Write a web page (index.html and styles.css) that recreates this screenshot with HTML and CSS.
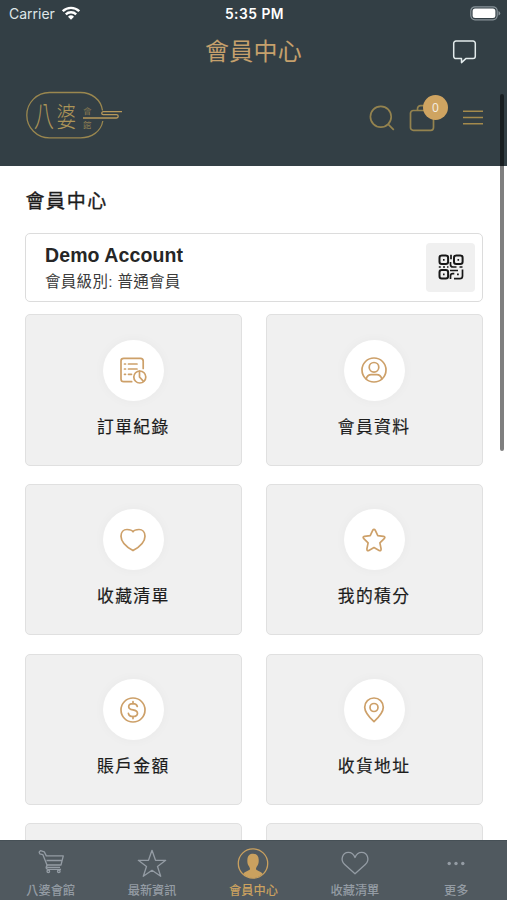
FILE: index.html
```html
<!DOCTYPE html>
<html lang="zh-Hant">
<head>
<meta charset="utf-8">
<meta name="viewport" content="width=device-width, initial-scale=1">
<title>會員中心</title>
<link rel="stylesheet" href="styles.css">
</head>
<body>
<div class="app">
  <header class="top">
    <div class="status">
      <div class="carrier">
        <span>Carrier</span>
        <svg width="18" height="14" viewBox="0 0 18 14"><g fill="none" stroke="#fff" stroke-width="2.3"><path d="M.8 5.2a11.6 11.6 0 0 1 16.4 0"/><path d="M3.8 8.4a7.4 7.4 0 0 1 10.4 0"/></g><path d="M9 13.8l-3-3.1a4.3 4.3 0 0 1 6 0z" fill="#fff"/></svg>
      </div>
      <div class="time">5:35 PM</div>
      <svg class="battery" width="31" height="15" viewBox="0 0 31 15"><rect x=".8" y=".8" width="26.4" height="13" rx="4.2" fill="none" stroke="#89949a" stroke-width="1.2"/><rect x="2.6" y="2.6" width="22.8" height="9.4" rx="2.5" fill="#fff"/><path d="M28.5 5v4.6q1.7-.7 1.7-2.3T28.5 5" fill="#89949a"/></svg>
    </div>
    <div class="nav">
      <h1>會員中心</h1>
      <svg class="chat" width="26" height="26" viewBox="0 0 26 26"><path d="M4 2h17a2.3 2.3 0 0 1 2.3 2.3v13a2.3 2.3 0 0 1-2.3 2.3h-7.2L9.5 23.6v-4H4a2.3 2.3 0 0 1-2.3-2.3v-13A2.3 2.3 0 0 1 4 2z" fill="none" stroke="#e3ebec" stroke-width="1.5" stroke-linejoin="round"/></svg>
    </div>
    <div class="brand">
      <svg class="logo" width="98" height="50" viewBox="0 0 98 50">
        <g fill="none" stroke="#9a874f" stroke-width="1.3"><path d="M77.5 20.5C76 9.5 66.5 2.5 55.5 2.5H24.5a22.7 22.7 0 0 0 0 45.4H55.5C66.5 47.9 76 41.5 77.8 31"/></g>
        <path d="M58 28H91.5a1.7 1.7 0 0 0 0-3.4H78.2a1.4 1.4 0 0 1 0-2.9H97" fill="none" stroke="#b7985a" stroke-width="1.3"/>
        <g class="logo-text"><text class="plain" transform="translate(8.8 36.5) scale(.78 1.12)" font-size="26">八</text><text transform="translate(31.5 36.8) scale(.82 1.14)" font-size="24">婆</text><text x="58" y="23.5" font-size="8.5">會</text><text x="58" y="38" font-size="8.5">館</text></g>
      </svg>
      <div class="tools">
        <svg width="26" height="26" viewBox="0 0 26 26" fill="none" stroke="#94834f" stroke-width="1.7"><circle cx="11.8" cy="11.8" r="10.4"/><path d="M19.3 19.3l5.5 5.5"/></svg>
        <div class="bag">
          <svg width="26" height="28" viewBox="0 0 26 28" fill="none" stroke="#94834f" stroke-width="1.7"><rect x="1.5" y="6.5" width="23" height="19.8" rx="2.8"/><path d="M8.5 6.5V5q0-3.3 3.3-3.3h2.4q3.3 0 3.3 3.3v1.5"/></svg>
          <span class="badge">0</span>
        </div>
        <svg width="20" height="16" viewBox="0 0 20 16" stroke="#a48a4c" stroke-width="1.5"><path d="M0 1.300h20M0 7.500h20M0 13.700h20"/></svg>
      </div>
    </div>
  </header>

  <main>
    <h2>會員中心</h2>
    <section class="account">
      <div>
        <div class="name">Demo Account</div>
        <div class="level">會員級別: 普通會員</div>
      </div>
      <div class="qr">
        <svg width="26" height="26" viewBox="0 0 26 26" fill="none" stroke="#181818" stroke-width="2"><rect x="1.5" y="1.5" width="8.6" height="8.6" rx="2.3"/><rect x="16" y="1.5" width="8.6" height="8.6" rx="2.3"/><rect x="1.5" y="16" width="8.6" height="8.6" rx="2.3"/><g stroke-width="1.7"><path d="M5 5.800h1.600M19.500 5.800h1.600M5 20.300h1.600M13 .8v4.500M12.500 8v2.500q0 2.500 2.500 2.500h3.500M.8 13h2M5 13h2M9 13h1.500M21.500 13h3M12 16.500h8M24.500 15.500v6.500q0 2.700-2.700 2.700H16M12.500 25v-3q0-2.300 2.300-2.300h1.500M19 20.300h1.800"/></g></svg>
      </div>
    </section>

    <section class="grid">
      <article class="card"><div class="disc"><svg width="30" height="30" viewBox="0 0 30 30"><path d="M25.200 13.500V6q0-2.700-2.700-2.700H5.700Q3 3.300 3 6v18q0 2.700 2.700 2.700h8"/><path d="M10.500 9h8.500M10.500 14h8.500M10.500 19.300h3M6.500 9h1M6.500 14h1M6.500 19.300h1"/><circle cx="21.800" cy="22" r="6"/><path d="M21.500 16v6l4 4.400"/></svg></div><h3>訂單紀錄</h3></article>
      <article class="card"><div class="disc"><svg width="30" height="30" viewBox="0 0 30 30"><circle cx="15" cy="15" r="12"/><circle cx="15" cy="12.300" r="4.800"/><path d="M7.200 24c.8-3 2.500-4.300 5-4.300h5.600c2.500 0 4.200 1.300 5 4.300"/></svg></div><h3>會員資料</h3></article>
      <article class="card"><div class="disc"><svg width="30" height="30" viewBox="0 0 30 30"><path d="M15 25.600C9.500 22.500 3 17.500 3 11.200 3 7.200 5.600 4.500 9 4.500c2.600 0 4.800.3 6 2.200 1.200-1.900 3.400-2.200 6-2.200 3.400 0 6 2.700 6 6.700 0 6.300-6.500 11.300-12 14.400z"/></svg></div><h3>收藏清單</h3></article>
      <article class="card"><div class="disc"><svg width="30" height="30" viewBox="0 0 30 30"><path d="M13.700 5.300q1.300-2 2.600 0l2.500 5.300 5.700.8q2.300.5.700 2.300l-4.300 4.200 1.200 6q.1 2.500-2 1.500L15 22.600l-5.100 2.800q-2.100 1-2-1.500l1.200-6-4.300-4.200q-1.600-1.800.7-2.300l5.700-.8z"/></svg></div><h3>我的積分</h3></article>
      <article class="card"><div class="disc"><svg width="30" height="30" viewBox="0 0 30 30"><circle cx="15" cy="15" r="12"/><path d="M19.300 11.500c-.4-1.900-2-2.900-4.300-2.900-2.500 0-4.300 1.200-4.300 3.100 0 2 1.600 2.700 4.300 3.200 2.800.5 4.500 1.300 4.500 3.300 0 2.100-1.900 3.300-4.500 3.300-2.500 0-4.300-1.100-4.600-3.200M15 6.600v2.200M15 21.300v2.300"/></svg></div><h3>賬戶金額</h3></article>
      <article class="card"><div class="disc"><svg width="30" height="30" viewBox="0 0 30 30"><path d="M15 26.700C11 23 5.700 18 5.700 12.300a9.300 9.300 0 0 1 18.600 0C24.300 18 19 23 15 26.700z"/><circle cx="15" cy="12.500" r="4"/></svg></div><h3>收貨地址</h3></article>
      <article class="card"></article>
      <article class="card"></article>
    </section>
  </main>

  <nav class="tabs">
    <div class="tab"><svg width="32" height="32" viewBox="0 0 32 32"><path d="M4 4l1.500-1.300 3.800 1.200 2 4h17L26 17H12.500q-2 1.200.2 2.300H25M4 4l.8 1.800 3 .8L12 17M11.500 12.500h15M12.500 17q-3 3.500.5 4.300h13"/><circle cx="13.300" cy="23.300" r="1.300"/><circle cx="23.800" cy="23.300" r="1.300"/></svg><span class="plain">八婆會館</span></div>
    <div class="tab"><svg width="32" height="32" viewBox="0 0 32 32"><path d="M16 2.300l3.500 10h10.200l-8.200 6.200 3.200 9.800L16 22.300l-8.700 6 3.200-9.800-8.200-6.200h10.200z"/></svg><span>最新資訊</span></div>
    <div class="tab active"><svg width="32" height="32" viewBox="0 0 32 32"><circle cx="16" cy="15.500" r="14.700"/><path d="M6.300 26c1.500-3 5.700-2.800 6.600-4.700.3-1-.4-2.200-1.300-3.600-1.200-1.600-1.400-4-1.200-6.200.2-3.700 2.300-5.700 5.700-5.700s5.500 2 5.600 5.700c.1 2.400-.1 4.600-1.300 6.200-1 1.400-1.600 2.600-1.300 3.600.7 1.900 5 1.700 6.600 4.700C20.500 31.300 11.500 31.300 6.300 26z" fill="currentColor" stroke="none"/></svg><span>會員中心</span></div>
    <div class="tab"><svg width="32" height="32" viewBox="0 0 32 32"><path d="M16 25.700L5.700 16.500C.8 12 3.500 4.300 9.300 4.300c3.200 0 5.500 1.800 6.700 5.200 1.200-3.400 3.500-5.200 6.700-5.200 5.800 0 8.500 7.700 3.600 12.200z"/></svg><span>收藏清單</span></div>
    <div class="tab"><svg width="32" height="32" viewBox="0 0 32 32"><g fill="currentColor" stroke="none"><circle cx="9.200" cy="15.500" r="1.700"/><circle cx="16" cy="15.500" r="1.700"/><circle cx="22.800" cy="15.500" r="1.700"/></g></svg><span>更多</span></div>
  </nav>
  <div class="scrollbar"></div>
</div>
</body>
</html>
```
FILE: styles.css
```css
* { box-sizing: border-box; }
body { margin: 0; background: #fff; font-family: "Liberation Sans", "Noto Sans CJK TC", sans-serif; color: #1c1c1c; }
h1, h2, h3 { margin: 0; font-weight: 400; }
svg { display: block; flex: none; }

.app { position: relative; display: flex; flex-direction: column; height: 900px; overflow: hidden; }

.top { flex: none; height: 165.5px; background: #333f45; }
.status { display: grid; grid-template-columns: 1fr auto 1fr; align-items: center; height: 28px; padding: 0 6px 0 9px; color: #fff; font-family: Inter, sans-serif; }
.carrier { display: flex; align-items: center; gap: 7px; margin-top: -1px; font-size: 14px; color: #dfe6e8; }
.carrier svg { margin-top: -2px; }
.time { margin-left: -1px; font-size: 13.8px; font-weight: 600; letter-spacing: .5px; }
.battery { justify-self: end; margin-top: -1px; }
.nav { display: grid; grid-template-columns: 1fr auto 1fr; align-items: center; height: 48px; padding: 0 29px; }
.nav h1 { grid-column: 2; font-size: 24px; line-height: 36px; letter-spacing: .3px; color: #c5a06c; margin-top: -1px; }
.chat { justify-self: end; margin-top: -1px; }
.brand { display: flex; justify-content: space-between; align-items: flex-start; padding: 14px 24px 0 25px; }
.logo-text { fill: #ab9458; font-family: "Noto Sans CJK TC", sans-serif; font-weight: 300; }
.plain { font-family: "Noto Sans CJK SC", sans-serif; }
.tools { display: flex; align-items: center; gap: 14px; padding-top: 14px; }
.tools > svg:last-child { margin-left: 14px; }
.bag { position: relative; }
.badge { position: absolute; left: 14px; top: -9px; width: 25px; height: 25px; border-radius: 50%; background: #cfa461; color: #f5eee3; font: 12px/25px "Open Sans", sans-serif; text-align: center; }

main { flex: 1; min-height: 0; overflow: hidden; padding: 21px 24.5px 0 25px; }
h2 { font-size: 19px; line-height: 30px; letter-spacing: 1.6px; margin-left: .5px; -webkit-text-stroke: .35px #1c1c1c; }
.account { display: flex; justify-content: space-between; align-items: center; height: 69.5px; margin-top: 16px; padding: 0 6.5px 0 19px; border: 1.5px solid #dcdcdc; border-radius: 5px; }
.name { font-size: 19.5px; line-height: 26px; font-weight: 700; letter-spacing: .1px; color: #262626; margin-top: 2px; }
.level { font-size: 15.5px; line-height: 24px; letter-spacing: .3px; color: #3c3c3c; margin-top: 2px; }
.qr { display: grid; place-items: center; width: 49px; height: 49px; border-radius: 4px; background: #f0f0f0; }
.grid { display: grid; grid-template-columns: 1fr 1fr; grid-auto-rows: 151.5px; gap: 18.3px 24px; margin-top: 12px; }
.card { display: flex; flex-direction: column; align-items: center; padding-top: 24.6px; background: #f0f0f0; border: 1.5px solid #e0e0e0; border-radius: 5px; }
.disc { display: grid; place-items: center; width: 61px; height: 61px; border-radius: 50%; background: #fff; box-shadow: 0 0 12px rgba(0, 0, 0, .035); }
.disc svg { fill: none; stroke: #cda069; stroke-width: 1.7; stroke-linecap: round; stroke-linejoin: round; }
h3 { font-size: 16.8px; line-height: 24px; letter-spacing: 1.4px; margin-top: 15px; -webkit-text-stroke: .2px #1c1c1c; }

.tabs { flex: none; display: grid; grid-template-columns: repeat(5, 1fr); height: 60px; background: #50595f; border-top: 1px solid #465056; }
.tab { display: flex; flex-direction: column; align-items: center; padding-top: 7px; color: #949ca4; font-size: 12.2px; line-height: 18px; }
.tab svg { fill: none; stroke: currentColor; stroke-width: 1.3; stroke-linejoin: round; }
.tab span { margin-top: 2px; font-weight: 500; white-space: nowrap; }
.tab .plain { margin-top: 1px; }
.tab.active { color: #caa15f; }
.scrollbar { position: absolute; right: 3px; top: 94px; width: 4px; height: 357px; border-radius: 2px; background: rgba(0, 0, 0, .5); }
```
